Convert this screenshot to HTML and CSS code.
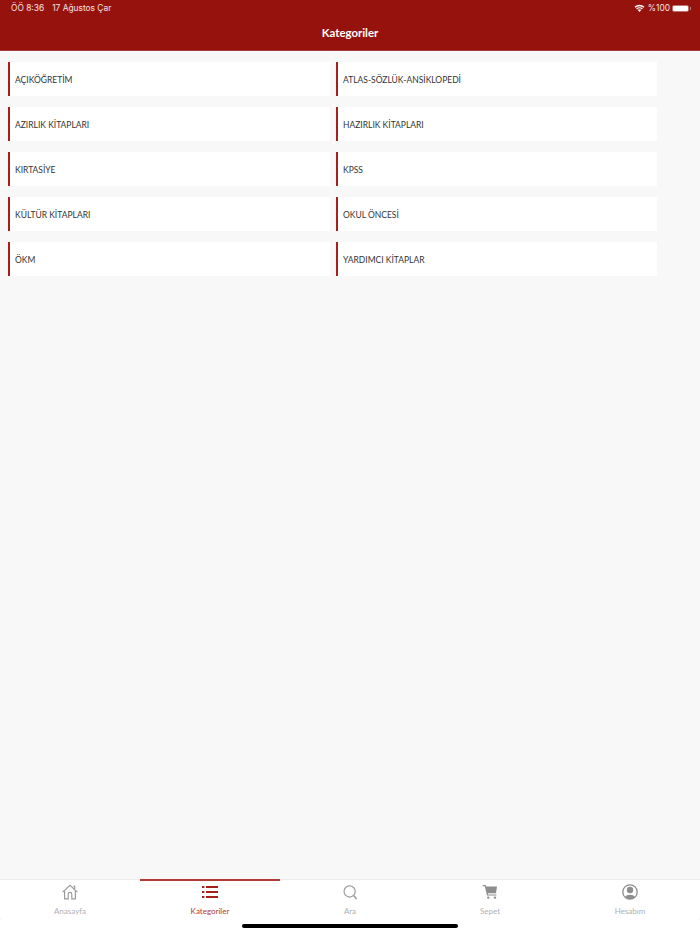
FILE: index.html
```html
<!DOCTYPE html>
<html lang="tr">
<head>
    <meta charset="UTF-8">
    <meta name="viewport" content="width=device-width, initial-scale=1.0">
    <title>Kategoriler</title>
    <link rel="stylesheet" href="styles.css">
</head>
<body>
    <div class="app">
        <header class="header">
            <div class="status">
                <div class="status-left">
                    <span>ÖÖ 8:36</span>
                    <span>17 Ağustos Çar</span>
                </div>
                <div class="status-right">
                    <svg class="wifi" width="11" height="8" viewBox="0 0 22 16">
                        <path d="M11 16l-3.6-3.8a5 5 0 0 1 7.2 0z" fill="#fff"/>
                        <path d="M2 6.6a13 13 0 0 1 18 0M5.2 10a8.4 8.4 0 0 1 11.6 0" fill="none" stroke="#fff" stroke-width="2.6"/>
                    </svg>
                    <span>%100</span>
                    <div class="battery"><div class="battery-fill"></div></div>
                </div>
            </div>
            <h1 class="title">Kategoriler</h1>
        </header>

        <main class="grid">
            <a class="cat">AÇIKÖĞRETİM</a>
            <a class="cat">ATLAS-SÖZLÜK-ANSİKLOPEDİ</a>
            <a class="cat">AZIRLIK KİTAPLARI</a>
            <a class="cat">HAZIRLIK KİTAPLARI</a>
            <a class="cat">KIRTASİYE</a>
            <a class="cat">KPSS</a>
            <a class="cat">KÜLTÜR KİTAPLARI</a>
            <a class="cat">OKUL ÖNCESİ</a>
            <a class="cat">ÖKM</a>
            <a class="cat">YARDIMCI KİTAPLAR</a>
        </main>

        <nav class="tabs">
            <a class="tab">
                <svg width="18" height="18" viewBox="-1 -1 20 20" fill="none" stroke="#9a9a9a" stroke-width="1.3">
                    <path d="M.8 9.2L9 1.6l8.2 7.6"/>
                    <path d="M3 7.6v9h4v-5.2a2 2 0 0 1 4 0v5.2h4v-9"/>
                    <path d="M12.6 2.6h1.6v3"/>
                </svg>
                <span>Anasayfa</span>
            </a>
            <a class="tab active">
                <svg width="18" height="18" viewBox="0 0 18 18" fill="#a5201b">
                    <rect x="1" y="3" width="2.4" height="2"/>
                    <rect x="5" y="3" width="12" height="2"/>
                    <rect x="1" y="8" width="2.4" height="2"/>
                    <rect x="5" y="8" width="12" height="2"/>
                    <rect x="1" y="13" width="2.4" height="2"/>
                    <rect x="5" y="13" width="12" height="2"/>
                </svg>
                <span>Kategoriler</span>
            </a>
            <a class="tab">
                <svg width="18" height="18" viewBox="-1 -1 20 20" fill="none" stroke="#9a9a9a">
                    <circle cx="8.6" cy="8.4" r="6.2" stroke-width="1.3"/>
                    <path d="M13 13l3.4 3.8" stroke-width="1.7"/>
                </svg>
                <span>Ara</span>
            </a>
            <a class="tab">
                <svg width="18" height="18" viewBox="0 0 18 18" fill="#8e8e8e">
                    <path d="M1.6 2h3l.5 1.4H16l-1 6.8H6.8l.3 1.2H15.4v1.2H6L3.8 3.2H1.6z"/>
                    <circle cx="7.2" cy="14.6" r="1.2"/>
                    <circle cx="14" cy="14.6" r="1.2"/>
                </svg>
                <span>Sepet</span>
            </a>
            <a class="tab">
                <svg width="18" height="18" viewBox="0 0 18 18">
                    <circle cx="9" cy="9" r="7.2" fill="none" stroke="#8e8e8e" stroke-width="1.3"/>
                    <circle cx="9" cy="7" r="3.2" fill="#8e8e8e"/>
                    <path d="M3.8 14a6 4.4 0 0 1 10.4 0A7 7 0 0 1 3.8 14z" fill="#8e8e8e"/>
                </svg>
                <span>Hesabım</span>
            </a>
        </nav>
        <div class="home-bar"></div>
    </div>
</body>
</html>
```

FILE: styles.css
```css
*{
    box-sizing: border-box;
}
body{
    margin: 0;
    background-color: #f8f8f8;
    font-family: "Lato", "Noto Sans", sans-serif;
}
.app{
    display: flex;
    flex-direction: column;
    height: 934px;
    overflow: hidden;
}
.header{
    height: 51px;
    flex-shrink: 0;
    background-color: #96120d;
    border-bottom: 1px solid #a63a36;
    color: white;
}
.status{
    display: flex;
    justify-content: space-between;
    align-items: center;
    height: 16px;
    padding: 0 11px 0 11px;
    font-family: "Inter", "Roboto", sans-serif;
    font-size: 8.4px;
    color: #f4e3e2;
}
.status-left{
    display: flex;
    gap: 8px;
}
.status-right{
    display: flex;
    align-items: center;
    gap: 2px;
}
.wifi{
    margin-right: 1px;
}
.battery{
    position: relative;
    width: 17px;
    height: 7px;
    border: 1px solid rgba(255,255,255,0.4);
    border-radius: 2px;
}
.battery::after{
    content: "";
    position: absolute;
    right: -3px;
    top: 1px;
    width: 1px;
    height: 3px;
    background-color: rgba(255,255,255,0.45);
}
.battery-fill{
    height: 100%;
    background-color: white;
    border-radius: 1px;
}
.title{
    margin: 9px 0 0;
    text-align: center;
    font-size: 11.4px;
    font-weight: 700;
    line-height: 16px;
}
.grid{
    flex: 1;
    display: grid;
    grid-template-columns: 322px 321px;
    grid-auto-rows: 34px;
    column-gap: 6px;
    row-gap: 11px;
    align-content: start;
    padding: 11px 0 0 8px;
}
.cat{
    display: flex;
    align-items: center;
    padding: 1px 0 0 5px;
    background-color: white;
    border-left: 2px solid #a5201b;
    color: #333;
    font-size: 8.5px;
}
.tabs{
    display: flex;
    height: 41px;
    flex-shrink: 0;
    background-color: white;
    border-radius: 0 0 4px 4px;
}
.tab{
    flex: 1;
    display: flex;
    flex-direction: column;
    align-items: center;
    padding-top: 3px;
    border-top: 1px solid #ececec;
    color: #b0b0b0;
    font-size: 8px;
}
.tab span{
    margin-top: 5px;
    line-height: 10px;
}
.tab.active{
    padding-top: 2px;
    border-top: 2px solid #b23a36;
    color: #b23a36;
}
.home-bar{
    height: 14px;
    flex-shrink: 0;
    padding-top: 4px;
    background-color: white;
}
.home-bar::after{
    content: "";
    display: block;
    width: 216px;
    height: 4px;
    margin: auto;
    background-color: black;
    border-radius: 2px;
}
```
